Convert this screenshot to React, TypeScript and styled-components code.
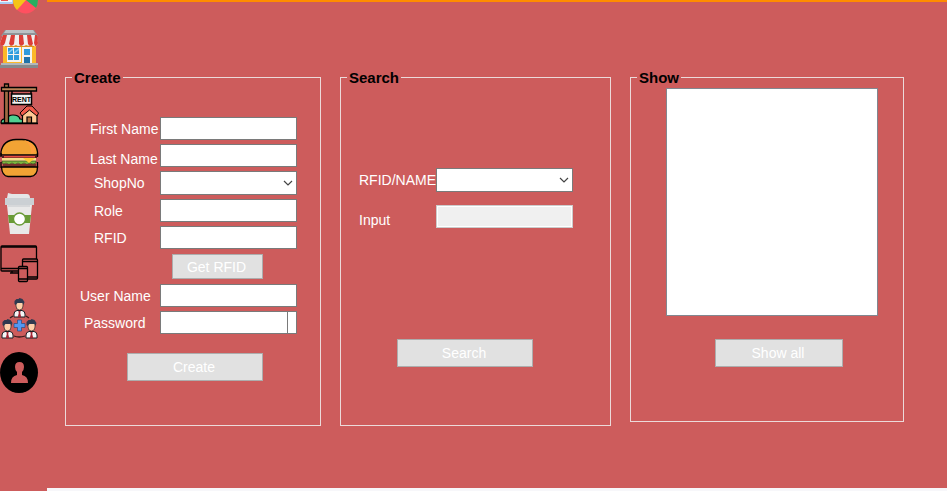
import React from "react";
import styled, { createGlobalStyle } from "styled-components";

const GlobalStyle = createGlobalStyle`
  *, *::before, *::after { box-sizing: border-box; }
  body {
    margin: 0;
    background: #cd5c5c;
    color: #ffffff;
    font-family: "Liberation Sans", Arial, sans-serif;
    font-size: 14px;
    line-height: 16px;
  }
  button, input, select, textarea { font: inherit; }
`;

const Page = styled.div`
  display: flex;
  min-height: 100vh;
`;

const Sidebar = styled.nav`
  display: flex;
  flex: 0 0 47px;
  flex-direction: column;
  align-items: flex-start;
`;

const NavButton = styled.button`
  display: block;
  padding: 0;
  border: 0;
  background: none;
  cursor: pointer;

  svg { display: block; }
`;

const Main = styled.main`
  flex: 1;
  display: grid;
  grid-template-columns: 256fr 271fr 274fr;
  gap: 19px;
  align-items: start;
  padding: 68px 43px 59px 18px;
  border-top: 2px solid #ff8c00;
  border-bottom: 3px solid #f7f7fa;
`;

const Group = styled.fieldset<{ $padding: string }>`
  min-width: 0;
  margin: 0;
  padding: ${(p) => p.$padding};
  border: 1px solid #ecdada;
`;

const GroupTitle = styled.legend<{ $inset: number }>`
  margin-left: -${(p) => p.$inset}px;
  padding: 0 2px;
  color: #000000;
  font-size: 15px;
  font-weight: bold;
  line-height: 15px;
`;

const FieldGrid = styled.div<{ $labelWidth: number; $gap: number }>`
  display: grid;
  grid-template-columns: ${(p) => p.$labelWidth}px minmax(0, 1fr);
  row-gap: ${(p) => p.$gap}px;
  align-items: center;
`;

const FieldLabel = styled.label<{ $indent?: number; $low?: boolean }>`
  padding-left: ${(p) => p.$indent ?? 0}px;
  align-self: ${(p) => (p.$low ? "end" : "center")};
  white-space: nowrap;
`;

const TextInput = styled.input`
  width: 100%;
  height: 23px;
  padding: 0 4px;
  border: 1px solid #7a7a7a;
  border-radius: 0;
  background: #ffffff;
  color: #000000;

  &:disabled {
    border-color: #cccccc;
    background: #f0f0f0;
    box-shadow: inset 0 0 0 1px #ffffff;
  }
`;

const SelectBox = styled.div`
  display: grid;
  align-items: center;

  > * { grid-area: 1 / 1; }
  > svg {
    justify-self: end;
    margin-right: 4px;
    pointer-events: none;
  }
`;

const Select = styled.select`
  appearance: none;
  width: 100%;
  height: 24px;
  padding: 0 20px 0 4px;
  border: 1px solid #7a7a7a;
  border-radius: 0;
  background: #ffffff;
  color: #000000;
`;

const PasswordBox = styled.div`
  display: flex;
  height: 23px;
  padding-right: 8px;
  border: 1px solid #7a7a7a;
  background: #ffffff;
`;

const PasswordInput = styled.input`
  flex: 1;
  min-width: 0;
  padding: 0 4px;
  border: 0;
  border-right: 1px solid #7a7a7a;
  background: #ffffff;
  color: #000000;
`;

const InlineAction = styled.div`
  grid-column: 2;
  display: flex;
  align-items: center;
  height: 27px;
  padding-left: 12px;
`;

const Actions = styled.div<{ $top: number; $left: number }>`
  display: flex;
  padding: ${(p) => p.$top}px 0 0 ${(p) => p.$left}px;
`;

const Button = styled.button<{ $width: number; $small?: boolean }>`
  width: ${(p) => p.$width}px;
  height: ${(p) => (p.$small ? 25 : 28)}px;
  padding: 0 2px 0 0;
  border: 1px solid #adadad;
  background: #e1e1e1;
  color: #ffffff;
`;

const Results = styled.textarea`
  display: block;
  width: 100%;
  height: 228px;
  border: 1px solid #828790;
  border-radius: 0;
  background: #ffffff;
  color: #000000;
  resize: none;
`;

const Chevron = () => (
  <svg width="10" height="8" viewBox="0 0 10 8" fill="none" stroke="#444444" strokeWidth="1.2">
    <path d="M1 2l4 4 4-4" />
  </svg>
);

const CELL = 54;

const ReportIcon = () => (
  <svg width="40" height="27" viewBox="0 0 40 27">
    <path d="M0 0h14v2q0 2-2 2H0z" fill="#a9cdf5" />
    <path d="M0 0h12v2H0z" fill="#edf3fc" />
    <path d="M1 0h7v1H1z" fill="#e8505b" />
    <circle cx="25.7" cy="1" r="12.5" fill="#ff5060" />
    <path d="M26 0L17 10Q13 6 13 0z" fill="#f5c518" />
    <path d="M26 0l10 8q2-3 2-8z" fill="#27ae60" />
  </svg>
);

const ShopIcon = () => (
  <svg width="40" height={CELL} viewBox="0 27 40 54">
    <path d="M3 45h33v19H3z" fill="#fbb829" />
    <path d="M5 45h29v2H5z" fill="#dd8d1f" />
    <path d="M7 47h14v15H7z" fill="#f5f3ee" />
    <path d="M8 48h5v6H8zm6 0h5v6h-5zm-6 7h5v5H8zm6 0h5v5h-5z" fill="#2e9bdc" />
    <path d="M8 52l5-4v2l-5 4zm6 0l5-4v2l-5 4z" fill="#7ccaf1" />
    <path d="M22 47h10v17H22z" fill="#f5f3ee" />
    <path d="M24 49h6v6h-6z" fill="#2e9bdc" />
    <path d="M24 57h6v7h-6z" fill="#2073a9" />
    <path d="M5 30h29l4 6H1z" fill="#8e9498" />
    <path d="M6 30h27l2 3H4z" fill="#bcc2c5" />
    <path d="M3 35h33l2 8q-1 4-4 3-2 0-3-2-2 3-5 1-2 2-5 0-3 2-5 0-3 2-5 0-2 2-5 1-4 1-6-3z" fill="#f1eeee" />
    <path d="M3 35h4l-2 8q-1 3-3 3-2-1-2-3zm8 0h4l-1 9q-2 3-5 0zm8 0h4l1 9q-3 3-5 0zm8 0h4l2 9q-3 3-5 0zm8 0h2l1 8q0 3-3 3l-1-3z" fill="#dc3e38" />
    <path d="M1 63h37v2H1z" fill="#b2b7ba" />
    <path d="M0 65h38v3H0z" fill="#858a8d" />
  </svg>
);

const RentIcon = () => (
  <svg width="40" height={CELL} viewBox="0 81 40 54" stroke="#000000">
    <path d="M1 123q0-5 6-4 1-4 6-4 6 0 7 4 5 0 5 4z" fill="#4fcf91" strokeWidth="1.2" />
    <path d="M4.500 84h4v39h-4z" fill="#a06b43" strokeWidth="1.3" />
    <path d="M1.500 87.500h35v3.500h-35z" fill="#bb8357" strokeWidth="1.3" />
    <path d="M12 91v3M31 91v3" strokeWidth="1.5" />
    <path d="M11.500 94h20v10.500h-20z" fill="#f4f4f2" strokeWidth="1.5" />
    <text x="21.5" y="102" textAnchor="middle" fontFamily="Liberation Sans, sans-serif" fontSize="7" fontWeight="bold" fill="#000000" stroke="none">RENT</text>
    <path d="M22.500 113v10H37v-10l-7.500-6z" fill="#ffc994" strokeWidth="1.2" />
    <path d="M20 113l7-7h5l6.500 7-1.500 3-7.500-6-7.500 6z" fill="#f15b4b" strokeWidth="1" />
    <path d="M27 117h4.500v6H27z" fill="#b57347" strokeWidth="1.2" />
    <path d="M1 123.500h37" strokeWidth="1.5" />
  </svg>
);

const BurgerIcon = () => (
  <svg width="40" height={CELL} viewBox="0 135 40 54">
    <path d="M1 155v-3q2-12 15-12.500h6Q36 140 37.500 152v3z" fill="#f1a334" stroke="#000000" strokeWidth="1.3" />
    <path d="M24 140q10 2 11 12l-4 2q1-9-7-14z" fill="#ff9e3d" />
    <path d="M2 155h35v3H2z" fill="#511f20" />
    <path d="M4 156h31v1.500H4z" fill="#e94e42" />
    <path d="M2 158h34v3H2z" fill="#f5df8b" />
    <path d="M2 161h34v2q-3 2-6 0-3 3-6 0-3 3-6 0-3 3-6 0-3 3-6 0-2 2-4 0z" fill="#7cb83f" stroke="#27371b" strokeWidth=".6" />
    <path d="M23 158h12l-6 5z" fill="#ffc834" />
    <path d="M3 164h33q1 3-2 3H5q-3 0-2-3z" fill="#78302b" />
    <path d="M1.500 167h36q0 9-7 9.500H8q-6-.5-6.500-9.500z" fill="#f1a334" stroke="#000000" strokeWidth="1.3" />
    <path d="M1 153v4M37.500 153v4M1 162v6M37.500 162v6" stroke="#000000" strokeWidth="1.3" />
  </svg>
);

const CoffeeIcon = () => (
  <svg width="40" height={CELL} viewBox="0 189 40 54">
    <path d="M8 193l4 1h15q3 0 3 4H7z" fill="#e4e6e7" />
    <path d="M7 205h25l-3 29H10z" fill="#e9e9e9" />
    <path d="M8 205h22v2H8z" fill="#d6d8da" />
    <path d="M5 198h29v7H5z" fill="#cbd0d4" />
    <path d="M8 215h23l-1 8H9z" fill="#699b37" />
    <circle cx="19.5" cy="219" r="6" fill="#ffffff" stroke="#699b37" strokeWidth="1.3" />
  </svg>
);

const DevicesIcon = () => (
  <svg width="40" height={CELL} viewBox="0 243 40 54" fill="#cd5c5c" stroke="#000000" strokeWidth="1.3">
    <rect x="1" y="246" width="35.5" height="25" rx="1" />
    <path d="M1 247h35M1 268.500h35M10 273h8M12 271v2" />
    <rect x="22.5" y="259" width="15" height="20" rx="1" />
    <path d="M22 261.500h15M22 277h15" />
    <rect x="18.5" y="266.5" width="9" height="15" rx="1" />
    <path d="M18 268.500h9M18 279h9" />
  </svg>
);

const Person = ({ x, y }: { x: number; y: number }) => (
  <g transform={`translate(${x} ${y})`}>
    <path d="M-5.500 19v-3q0-3 3-3.500h5q3 .5 3 3.500v3z" fill="#f4f5f6" stroke="#191c24" strokeWidth="1" />
    <path d="M-1.200 13h2.400l-.5 2 1 4h-3.400l1-4z" fill="#a32635" />
    <path d="M-3.500 4h7v4q0 4-3.500 4t-3.500-4z" fill="#ffd0aa" stroke="#2a2427" strokeWidth=".7" />
    <path d="M-5 6V3l2-2h2l1-1 3 1 2 3-1 3-1-2h-5l-2 2z" fill="#30394f" />
  </g>
);

const TeamIcon = () => (
  <svg width="40" height={CELL} viewBox="0 297 40 54">
    <path d="M10 318l3-2M26 316l3 2M14 336q5 2 11 0" fill="none" stroke="#361b1c" strokeWidth="1.3" />
    <Person x={19.5} y={298} />
    <Person x={7.5} y={319} />
    <Person x={31.5} y={319} />
    <path d="M17.500 320h4v3.500h3.500v4h-3.500v3.500h-4v-3.500H14v-4h3.500z" fill="#5498f3" stroke="#294a80" strokeWidth=".7" />
  </svg>
);

const AccountIcon = () => (
  <svg width="40" height={CELL} viewBox="0 351 40 54">
    <ellipse cx="19" cy="372.5" rx="19" ry="20.5" fill="#000000" />
    <path d="M19.500 362q4.500 0 4.500 5 0 3-2 5v3q6 1 6 8H11q0-7 6-8v-3q-2-2-2-5 0-5 4.500-5z" fill="#cd5c5c" />
  </svg>
);

const navItems = [
  { name: "Reports", Icon: ReportIcon },
  { name: "Shops", Icon: ShopIcon },
  { name: "Rent", Icon: RentIcon },
  { name: "Food", Icon: BurgerIcon },
  { name: "Drinks", Icon: CoffeeIcon },
  { name: "Devices", Icon: DevicesIcon },
  { name: "Staff", Icon: TeamIcon },
  { name: "Account", Icon: AccountIcon },
];

export default function App() {
  return (
    <>
      <GlobalStyle />
      <Page>
        <Sidebar>
          {navItems.map(({ name, Icon }) => (
            <NavButton key={name} type="button" aria-label={name}>
              <Icon />
            </NavButton>
          ))}
        </Sidebar>
        <Main>
          <Group $padding="32px 23px 44px 14px">
            <GroupTitle $inset={8}>Create</GroupTitle>
            <FieldGrid $labelWidth={80} $gap={4}>
              <FieldLabel htmlFor="first-name" $indent={10}>First Name</FieldLabel>
              <TextInput id="first-name" />
              <FieldLabel htmlFor="last-name" $indent={10} $low>Last Name</FieldLabel>
              <TextInput id="last-name" />
              <FieldLabel htmlFor="shop-no" $indent={14}>ShopNo</FieldLabel>
              <SelectBox>
                <Select id="shop-no" />
                <Chevron />
              </SelectBox>
              <FieldLabel htmlFor="role" $indent={14}>Role</FieldLabel>
              <TextInput id="role" />
              <FieldLabel htmlFor="rfid" $indent={14}>RFID</FieldLabel>
              <TextInput id="rfid" />
              <InlineAction>
                <Button type="button" $width={91} $small>Get RFID</Button>
              </InlineAction>
              <FieldLabel htmlFor="user-name">User Name</FieldLabel>
              <TextInput id="user-name" />
              <FieldLabel htmlFor="password" $indent={4}>Password</FieldLabel>
              <PasswordBox>
                <PasswordInput id="password" type="password" />
              </PasswordBox>
            </FieldGrid>
            <Actions $top={19} $left={47}>
              <Button type="button" $width={136}>Create</Button>
            </Actions>
          </Group>

          <Group $padding="83px 37px 58px 18px">
            <GroupTitle $inset={12}>Search</GroupTitle>
            <FieldGrid $labelWidth={77} $gap={13}>
              <FieldLabel htmlFor="search-by">RFID/NAME</FieldLabel>
              <SelectBox>
                <Select id="search-by" />
                <Chevron />
              </SelectBox>
              <FieldLabel htmlFor="search-input" $low>Input</FieldLabel>
              <TextInput id="search-input" disabled />
            </FieldGrid>
            <Actions $top={111} $left={38}>
              <Button type="button" $width={136}>Search</Button>
            </Actions>
          </Group>

          <Group $padding="3px 25px 54px 35px">
            <GroupTitle $inset={29}>Show</GroupTitle>
            <Results aria-label="Results" readOnly />
            <Actions $top={23} $left={49}>
              <Button type="button" $width={128}>Show all</Button>
            </Actions>
          </Group>
        </Main>
      </Page>
    </>
  );
}
